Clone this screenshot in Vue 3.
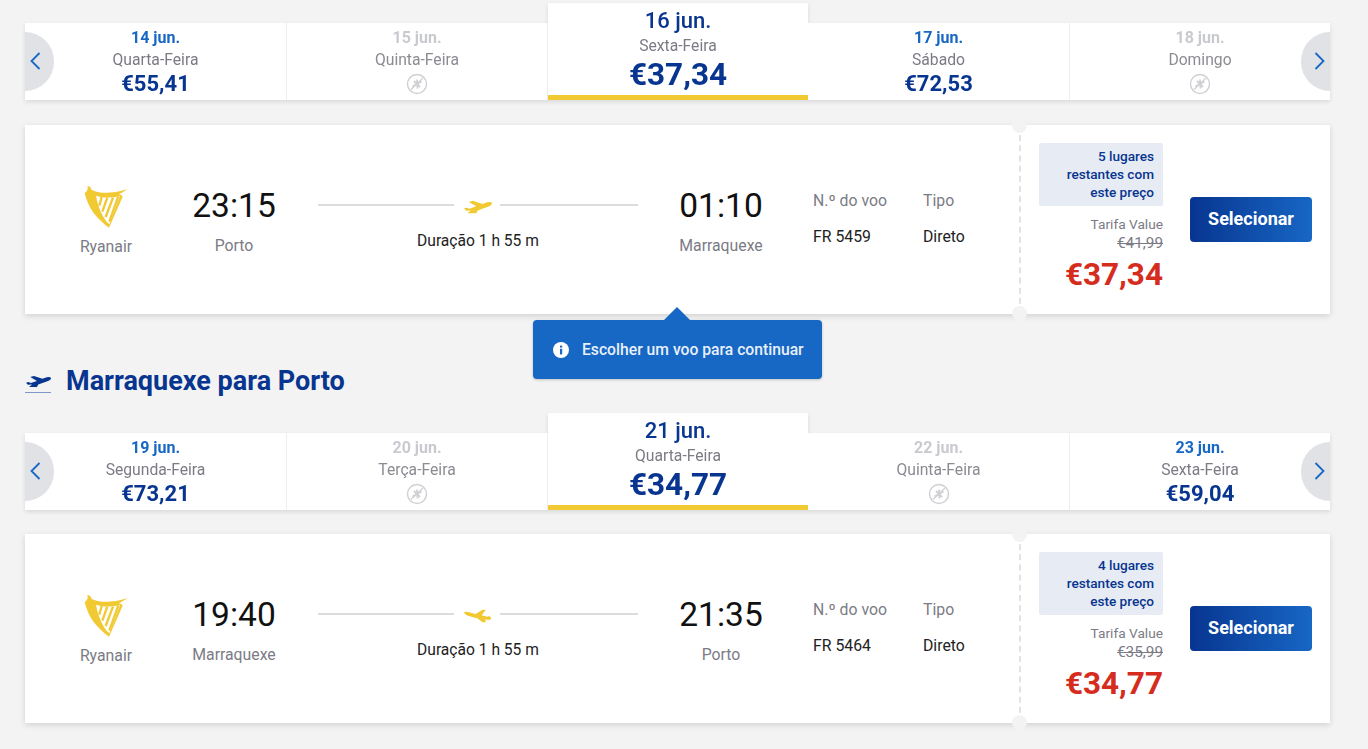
<template>
  <div class="page">
    <section v-for="(leg, legIndex) in legs" :key="leg.flightNo" class="leg">
      <div v-if="legIndex > 0" class="leg-title">
        <span class="title-icon">
          <svg width="25" height="13" viewBox="72 46 82 40"><path :d="takeoffPath" fill="#073590" /></svg>
        </span>
        <h2>{{ leg.title }}</h2>
      </div>

      <div class="date-strip">
        <div
          v-for="day in leg.days"
          :key="day.date"
          class="day"
          :class="{ active: day.active, empty: !day.price }"
        >
          <div class="day-date">{{ day.date }}</div>
          <div class="day-name">{{ day.name }}</div>
          <div v-if="day.price" class="day-price">{{ day.price }}</div>
          <svg v-else class="no-flight" width="22" height="22" viewBox="0 0 22 22">
            <circle cx="11" cy="11" r="9.5" fill="none" stroke="#cfd0d4" stroke-width="1.4" />
            <path d="M6.5 13.5 L15.5 8.5 M11 6.5 L11.5 15.5 M8 8 L14 14" stroke="#cfd0d4" stroke-width="1.8" />
            <path d="M5 16.5 L17 5" stroke="#cfd0d4" stroke-width="1.2" />
          </svg>
        </div>
        <button class="nav prev">
          <svg width="11" height="18" viewBox="0 0 11 18"><path d="M9.5 1 L1.5 9 L9.5 17" fill="none" stroke="#1767c4" stroke-width="1.8" /></svg>
        </button>
        <button class="nav next">
          <svg width="11" height="18" viewBox="0 0 11 18"><path d="M1.5 1 L9.5 9 L1.5 17" fill="none" stroke="#1767c4" stroke-width="1.8" /></svg>
        </button>
      </div>

      <div class="flight-card">
        <div class="airline">
          <svg width="45" height="44" viewBox="72 48 135 132">
            <path fill="#f1c933" d="M74 72 C82 68 85 60 82 52 C89 50 93 55 94 62 C115 74 155 76 202 60 C192 68 184 72 176 76 C182 77 186 79 188 83 L147 176 C128 162 112 146 98 128 C86 110 78 90 74 72 Z" />
            <path fill="#fff" d="M108 80 C128 87 152 88 180 81 L148 166 C130 150 114 116 108 80 Z" />
            <path fill="none" stroke="#f1c933" stroke-width="7" d="M125 84 L118 110 M142 86 L127 128 M159 86 L137 144 M175 82 L148 158" />
          </svg>
          <div class="muted">Ryanair</div>
        </div>

        <div class="place depart">
          <div class="time">{{ leg.departTime }}</div>
          <div class="muted">{{ leg.from }}</div>
        </div>

        <div class="route">
          <div class="route-line">
            <svg v-if="legIndex === 0" width="28" height="14" viewBox="72 46 82 40"><path :d="takeoffPath" fill="#f1c933" /></svg>
            <svg v-else width="28" height="14" viewBox="72 46 82 40"><path :d="landingPath" fill="#f1c933" /></svg>
          </div>
          <div class="duration">{{ leg.duration }}</div>
        </div>

        <div class="place arrive">
          <div class="time">{{ leg.arriveTime }}</div>
          <div class="muted">{{ leg.to }}</div>
        </div>

        <div class="info">
          <div class="muted">N.º do voo</div>
          <div class="info-value">{{ leg.flightNo }}</div>
        </div>
        <div class="info">
          <div class="muted">Tipo</div>
          <div class="info-value">Direto</div>
        </div>

        <div class="fare">
          <span class="notch top"></span>
          <span class="notch bottom"></span>
          <div class="fare-prices">
            <div class="seats">{{ leg.seats }} lugares restantes com este preço</div>
            <div class="fare-name">Tarifa Value</div>
            <div class="old-price">{{ leg.oldPrice }}</div>
            <div class="price">{{ leg.price }}</div>
          </div>
          <button class="select-btn">Selecionar</button>
        </div>
      </div>

      <div v-if="legIndex === 0" class="hint">
        <svg width="16" height="16" viewBox="0 0 16 16">
          <circle cx="8" cy="8" r="8" fill="#fff" />
          <rect x="7" y="6.8" width="2.2" height="5.6" fill="#1767c4" />
          <rect x="7" y="3.6" width="2.2" height="2" fill="#1767c4" />
        </svg>
        <span>Escolher um voo para continuar</span>
      </div>
    </section>
  </div>
</template>

<script setup>
// plane shapes, drawn against the same viewBox
const takeoffPath = 'M72 70 L80 68 L88 71 L108 64 L86 51 L98 48 L126 57 L140 52 Q153 49 154 55 Q154 61 140 66 L112 76 L108 84 L82 84 L92 76 L78 77 Z'
const landingPath = 'M72 56 Q74 52 84 54 L106 60 L126 48 L136 48 L124 64 L140 68 L146 66 L152 72 L148 78 L134 76 L136 84 L126 84 L112 73 L86 66 Q74 62 72 56 Z'

const legs = [
  {
    title: 'Porto para Marraquexe',
    from: 'Porto',
    to: 'Marraquexe',
    departTime: '23:15',
    arriveTime: '01:10',
    duration: 'Duração 1 h 55 m',
    flightNo: 'FR 5459',
    seats: 5,
    oldPrice: '€41,99',
    price: '€37,34',
    days: [
      { date: '14 jun.', name: 'Quarta-Feira', price: '€55,41' },
      { date: '15 jun.', name: 'Quinta-Feira' },
      { date: '16 jun.', name: 'Sexta-Feira', price: '€37,34', active: true },
      { date: '17 jun.', name: 'Sábado', price: '€72,53' },
      { date: '18 jun.', name: 'Domingo' },
    ],
  },
  {
    title: 'Marraquexe para Porto',
    from: 'Marraquexe',
    to: 'Porto',
    departTime: '19:40',
    arriveTime: '21:35',
    duration: 'Duração 1 h 55 m',
    flightNo: 'FR 5464',
    seats: 4,
    oldPrice: '€35,99',
    price: '€34,77',
    days: [
      { date: '19 jun.', name: 'Segunda-Feira', price: '€73,21' },
      { date: '20 jun.', name: 'Terça-Feira' },
      { date: '21 jun.', name: 'Quarta-Feira', price: '€34,77', active: true },
      { date: '22 jun.', name: 'Quinta-Feira' },
      { date: '23 jun.', name: 'Sexta-Feira', price: '€59,04' },
    ],
  },
]
</script>

<style>
body {
  background: #f3f3f3;
}
</style>

<style scoped>
.page {
  width: 1305px;
  min-height: 749px;
  box-sizing: border-box;
  padding: 3px 0 0 0;
  margin-left: 25px;
  font-family: Roboto, "Liberation Sans", sans-serif;
  color: #222;
}

.leg {
  position: relative;
}

/* ===== TITLE ===== */
.leg-title {
  display: flex;
  align-items: center;
  height: 30px;
  margin-top: 52px;
  margin-bottom: 17px;
}

.title-icon {
  display: flex;
  width: 25px;
  padding: 0 0 4px 1px;
  border-bottom: 1px solid #7f97c6;
  margin-right: 15px;
  margin-top: 5px;
}

.leg-title h2 {
  margin: 0;
  font-size: 27px;
  line-height: 30px;
  font-weight: 700;
  color: #073590;
}

/* ===== DATE STRIP ===== */
.date-strip {
  position: relative;
  display: grid;
  grid-template-columns: 262px 261px 260px 262px 260px;
  align-items: end;
  filter: drop-shadow(0 2px 2px rgba(0, 0, 0, 0.1));
}

.day {
  height: 77px;
  box-sizing: border-box;
  padding-top: 5px;
  background: #fff;
  border-right: 1px solid #eeeeee;
  text-align: center;
}

.day:last-of-type {
  border-right: none;
}

.day-date {
  font-size: 16px;
  line-height: 20px;
  font-weight: 700;
  color: #1767c4;
}

.day-name {
  margin-top: 1px;
  font-size: 15.7px;
  line-height: 22px;
  color: #7b7b85;
}

.day-price {
  font-size: 22px;
  line-height: 26px;
  font-weight: 700;
  color: #073590;
}

.day.empty .day-date {
  color: #c9cacf;
}

.day.empty .day-name {
  color: #8b8b93;
}

.no-flight {
  display: block;
  margin: 2px auto 0;
}

.day.active {
  height: 97px;
  padding-top: 5px;
  border-right: none;
  border-bottom: 5px solid #f1c933;
}

.day.active .day-date {
  font-size: 22px;
  line-height: 26px;
  font-weight: 500;
  color: #073590;
}

.day.active .day-name {
  margin-top: 1px;
}

.day.active .day-price {
  font-size: 31.5px;
  line-height: 35px;
}

.nav {
  position: absolute;
  top: 50%;
  margin-top: -20px;
  width: 29px;
  height: 59px;
  padding: 0;
  border: none;
  background: #e0e2e5;
  display: flex;
  align-items: center;
}

.nav.prev {
  left: 0;
  border-radius: 0 30px 30px 0;
  justify-content: flex-start;
  padding-left: 5px;
  box-sizing: border-box;
}

.nav.next {
  right: 0;
  border-radius: 30px 0 0 30px;
  justify-content: flex-end;
  padding-right: 5px;
  box-sizing: border-box;
}

/* ===== FLIGHT CARD ===== */
.flight-card {
  position: relative;
  display: flex;
  align-items: flex-start;
  height: 189px;
  box-sizing: border-box;
  margin-top: 24px;
  padding: 59px 0 0 26px;
  background: #fff;
  box-shadow: 0 2px 6px rgba(0, 0, 0, 0.14);
}

.leg:first-child .flight-card {
  margin-top: 25px;
}

.muted {
  font-size: 15.8px;
  line-height: 22px;
  color: #7b7b85;
}

.airline {
  width: 110px;
  margin-right: 23px;
  text-align: center;
}

.airline svg {
  display: block;
  margin: 1px auto 7px;
}

.place {
  text-align: center;
}

.place .muted {
  margin-top: 7px;
}

.depart {
  width: 100px;
  margin-right: 34px;
}

.arrive {
  width: 120px;
  margin-right: 32px;
}

.time {
  font-size: 33.5px;
  line-height: 44px;
  color: #111;
}

.route {
  width: 320px;
  margin-right: 23px;
  text-align: center;
}

.route-line {
  display: flex;
  justify-content: center;
  align-items: center;
  height: 42px;
  background: linear-gradient(#dcdcdc, #dcdcdc) left center / 136px 2px no-repeat,
    linear-gradient(#dcdcdc, #dcdcdc) right center / 138px 2px no-repeat;
}

.route-line svg {
  margin-top: 4px;
}

.duration {
  margin-top: 5px;
  font-size: 15.6px;
  line-height: 20px;
  color: #222;
}

.info {
  width: 110px;
  padding-top: 6px;
}

.info-value {
  margin-top: 14px;
  font-size: 15.8px;
  line-height: 22px;
  color: #222;
}

/* ===== FARE ===== */
.fare {
  position: absolute;
  right: 0;
  top: 0;
  display: flex;
  align-items: flex-start;
  box-sizing: border-box;
  width: 311px;
  height: 189px;
  padding: 18px 18px 0 18px;
  border-left: 2px dashed #e2e2e2;
}

.notch {
  position: absolute;
  left: -9px;
  width: 15px;
  height: 15px;
  border-radius: 50%;
  background: #f3f3f3;
}

.notch.top {
  top: -7px;
}

.notch.bottom {
  bottom: -7px;
}

.fare-prices {
  flex: none;
  width: 124px;
  text-align: right;
}

.seats {
  box-sizing: border-box;
  height: 63px;
  padding: 4px 9px;
  border-radius: 2px;
  background: #e7ebf3;
  font-size: 13.6px;
  line-height: 18px;
  font-weight: 500;
  color: #073590;
}

.fare-name {
  margin-top: 9px;
  font-size: 13.7px;
  line-height: 18px;
  color: #7b7b85;
}

.old-price {
  font-size: 15.3px;
  line-height: 20px;
  color: #7b7b85;
  text-decoration: line-through;
}

.price {
  margin-top: 4px;
  font-size: 31.5px;
  line-height: 36px;
  font-weight: 700;
  color: #d52c1e;
}

.select-btn {
  flex: none;
  width: 122px;
  height: 45px;
  margin: 54px 0 0 27px;
  padding: 0 0 3px;
  border: none;
  border-radius: 4px;
  background: linear-gradient(to right, #073590, #1767c4);
  font-family: inherit;
  font-size: 18px;
  font-weight: 700;
  color: #fff;
}

/* ===== TOOLTIP ===== */
.hint {
  position: absolute;
  top: 317px;
  left: 508px;
  display: flex;
  align-items: center;
  gap: 13px;
  box-sizing: border-box;
  width: 289px;
  height: 59px;
  padding-left: 20px;
  border-radius: 4px;
  background: #1767c4;
  box-shadow: 0 1px 3px rgba(0, 0, 0, 0.2);
  font-size: 15.7px;
  font-weight: 500;
  color: #e8f0fa;
  z-index: 3;
}

.hint::before {
  content: "";
  position: absolute;
  top: -13px;
  left: 131px;
  border-left: 13px solid transparent;
  border-right: 13px solid transparent;
  border-bottom: 13px solid #1767c4;
}
</style>
